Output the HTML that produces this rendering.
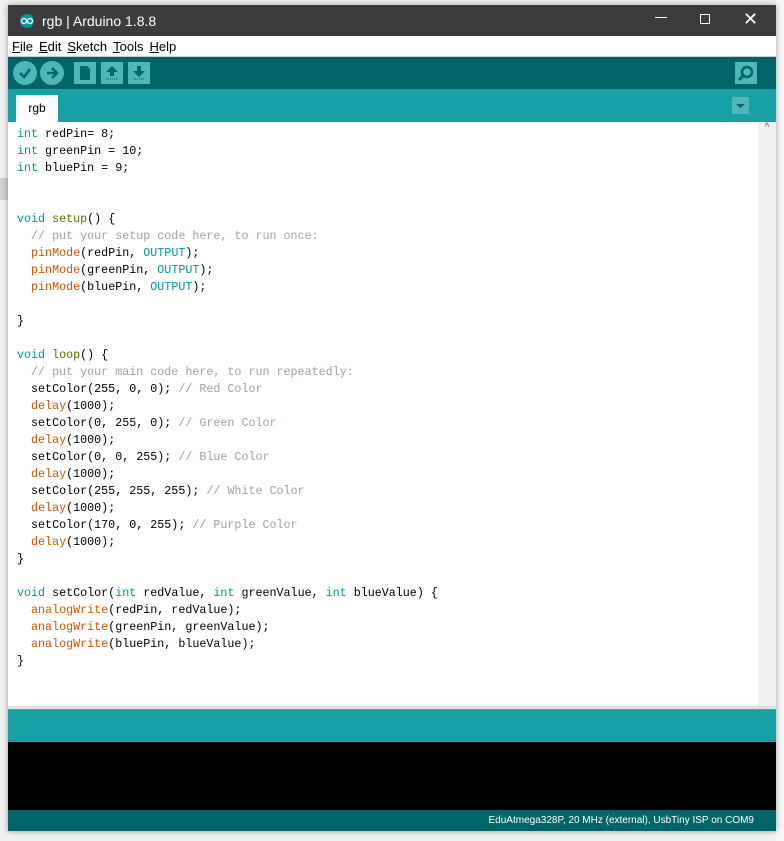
<!DOCTYPE html>
<html><head><meta charset="utf-8"><style>
*{margin:0;padding:0;box-sizing:border-box}
body{width:784px;height:841px;overflow:hidden;background:#f0f0f0;position:relative;font-family:"Liberation Sans",sans-serif}
.win{position:absolute;left:8px;top:5px;width:768px;height:826px;background:#fff;box-shadow:0 0 6px rgba(0,0,0,.35)}
.title{height:31px;background:#3c3c3c;color:#fff;font-size:14px;display:flex;align-items:center;padding-left:10px}
.menu{height:21px;background:#fff;font-size:13px;display:flex;align-items:center;padding-left:4px;border-bottom:1px solid #ccc}
.menu span{margin-right:6px}
.tb{height:32px;background:#006468;position:relative}
.tabs{height:33px;background:#17a1a5;position:relative}
.btn{position:absolute;top:5px;width:22px;height:22px;background:#4db7bb}
.code{position:absolute;left:0;top:119px;width:750px;height:582px;font-family:"Liberation Mono",monospace;font-size:11.7px;line-height:17px;padding:2px 0 0 9px;white-space:pre;color:#000}
.k{color:#00979c}.f{color:#5e6d03}.o{color:#d35400}.c{color:#95a5a6}
</style></head><body>
<div style="position:absolute;left:0;top:178px;width:8px;height:22px;background:#d0d0d0"></div>
<div style="position:absolute;left:776px;top:0;width:8px;height:841px;background:#f7f7f7"></div>
<div class="win">
<div class="title"><svg width="18" height="14" viewBox="0 0 18 14"><circle cx="9" cy="7" r="7" fill="#00979c"/><circle cx="6" cy="7" r="2.5" fill="none" stroke="#fff" stroke-width="1.3"/><circle cx="12" cy="7" r="2.5" fill="none" stroke="#fff" stroke-width="1.3"/></svg><span style="margin-left:6px">rgb | Arduino 1.8.8</span>
<span style="position:absolute;left:647px;top:12px;width:12px;border-top:1px solid #fff"></span>
<span style="position:absolute;left:692px;top:9px;width:10px;height:10px;border:1px solid #fff"></span>
<span style="position:absolute;left:735px;top:4px;font-size:18px">✕</span></div>
<div class="menu"><span><u>F</u>ile</span><span><u>E</u>dit</span><span><u>S</u>ketch</span><span><u>T</u>ools</span><span><u>H</u>elp</span></div>
<div class="tb">
<div style="position:absolute;left:5px;top:4px;width:24px;height:24px;border-radius:50%;background:#4db7bb"><svg width="24" height="24"><path d="M7 12l4 4 6-8" stroke="#006468" stroke-width="2.5" fill="none"/></svg></div>
<div style="position:absolute;left:32px;top:4px;width:24px;height:24px;border-radius:50%;background:#4db7bb"><svg width="24" height="24"><path d="M7 12h9M12 7l5 5-5 5" stroke="#006468" stroke-width="2.5" fill="none"/></svg></div>
<div class="btn" style="left:66px"><svg width="22" height="22"><path d="M6 4h7l3 3v11H6z" fill="#006468"/></svg></div>
<div class="btn" style="left:93px"><svg width="22" height="22"><path d="M11 4l6 6h-4v4H9v-4H5z" fill="#006468"/><path d="M5 17h12" stroke="#006468" stroke-dasharray="1 1"/></svg></div>
<div class="btn" style="left:120px"><svg width="22" height="22"><path d="M11 15l6-6h-4V4H9v5H5z" fill="#006468"/><path d="M5 17h12" stroke="#006468" stroke-dasharray="1 1"/></svg></div>
<div class="btn" style="left:727px"><svg width="22" height="22"><circle cx="12" cy="10" r="5" stroke="#006468" stroke-width="2.5" fill="none"/><path d="M8 14l-4 4" stroke="#006468" stroke-width="3"/></svg></div>
</div>
<div class="tabs">
<div style="position:absolute;left:8px;top:6px;width:42px;height:27px;background:#fff;font-size:12px;text-align:center;line-height:26px">rgb</div>
<div style="position:absolute;left:724px;top:8px;width:17px;height:17px;background:#4db7bb"><svg width="17" height="17"><path d="M4 7h9l-4.5 4z" fill="#006468"/></svg></div>
</div>
<div class="code"><span class="k">int</span> redPin= 8;
<span class="k">int</span> greenPin = 10;
<span class="k">int</span> bluePin = 9;


<span class="k">void</span> <span class="f">setup</span>() {
  <span class="c">// put your setup code here, to run once:</span>
  <span class="o">pinMode</span>(redPin, <span class="k">OUTPUT</span>);
  <span class="o">pinMode</span>(greenPin, <span class="k">OUTPUT</span>);
  <span class="o">pinMode</span>(bluePin, <span class="k">OUTPUT</span>);

}

<span class="k">void</span> <span class="f">loop</span>() {
  <span class="c">// put your main code here, to run repeatedly:</span>
  setColor(255, 0, 0); <span class="c">// Red Color</span>
  <span class="o">delay</span>(1000);
  setColor(0, 255, 0); <span class="c">// Green Color</span>
  <span class="o">delay</span>(1000);
  setColor(0, 0, 255); <span class="c">// Blue Color</span>
  <span class="o">delay</span>(1000);
  setColor(255, 255, 255); <span class="c">// White Color</span>
  <span class="o">delay</span>(1000);
  setColor(170, 0, 255); <span class="c">// Purple Color</span>
  <span class="o">delay</span>(1000);
}

<span class="k">void</span> setColor(<span class="k">int</span> redValue, <span class="k">int</span> greenValue, <span class="k">int</span> blueValue) {
  <span class="o">analogWrite</span>(redPin, redValue);
  <span class="o">analogWrite</span>(greenPin, greenValue);
  <span class="o">analogWrite</span>(bluePin, blueValue);
}</div>
<div style="position:absolute;left:750px;top:117px;width:18px;height:584px;background:#f0f0f0;font-size:10px;color:#555;text-align:center">^</div>
<div style="position:absolute;left:0;top:701px;width:768px;height:4px;background:#e0e0e0;border-bottom:1px solid #888"></div>
<div style="position:absolute;left:0;top:705px;width:768px;height:32px;background:#17a1a5"></div>
<div style="position:absolute;left:0;top:737px;width:768px;height:68px;background:#000"></div>
<div style="position:absolute;left:0;top:805px;width:768px;height:21px;background:#006468;color:#fff;font-size:10px;text-align:right;padding-right:22px;line-height:21px">EduAtmega328P, 20 MHz (external), UsbTiny ISP on COM9</div>
</div>
</body></html>
